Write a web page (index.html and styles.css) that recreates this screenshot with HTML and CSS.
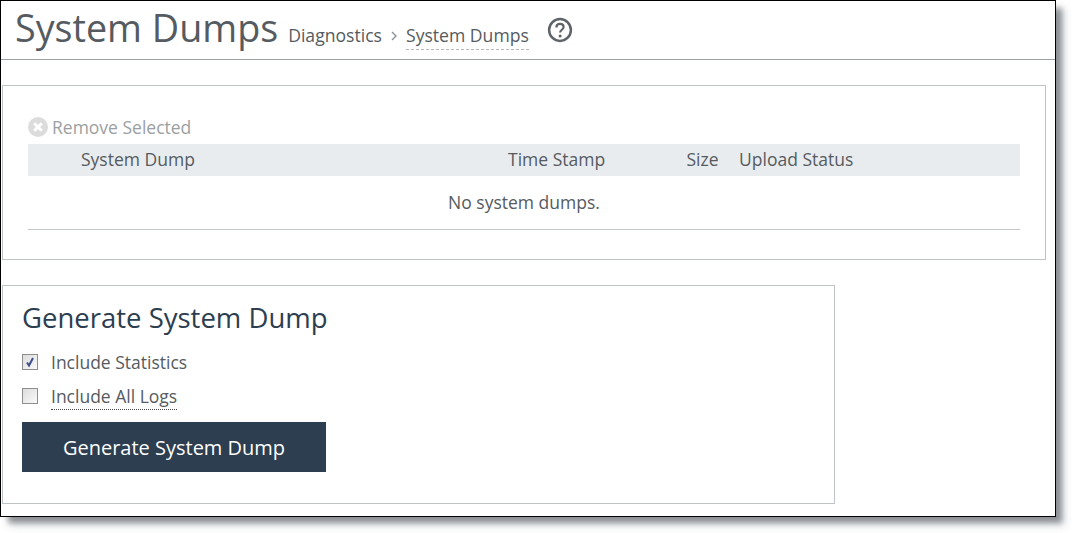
FILE: index.html
```html
<!DOCTYPE html>
<html lang="en">
<head>
<meta charset="utf-8">
<title>System Dumps</title>
<link rel="stylesheet" href="styles.css">
</head>
<body>
<div class="frame">
  <header class="head">
    <h1 class="title">System Dumps</h1>
    <span class="crumb">Diagnostics</span>
    <svg class="chev" width="8" height="12" viewBox="0 0 8 12"><path d="M2 2l4 4-4 4" fill="none" stroke="#8a9196" stroke-width="1.4"/></svg>
    <span class="crumb current">System Dumps</span>
    <svg class="help" width="26" height="26" viewBox="0 0 26 26"><circle cx="13" cy="13" r="10.9" fill="none" stroke="#5f6468" stroke-width="2.500"/><path d="M9.4 10.400c0-2.200 1.600-3.500 3.600-3.500s3.600 1.200 3.600 3.100c0 2.800-3.500 2.700-3.500 5.600" fill="none" stroke="#5f6468" stroke-width="2.200"/><circle cx="13.100" cy="18.900" r="1.500" fill="#5f6468"/></svg>
  </header>
  <section class="panel list">
    <div class="remove">
      <svg width="20" height="20" viewBox="0 0 20 20"><circle cx="10" cy="10" r="10" fill="#dcdcdc"/><path d="M6.200 6.200l7.600 7.600M13.800 6.200l-7.600 7.600" stroke="#fff" stroke-width="3"/></svg>
      <span>Remove Selected</span>
    </div>
    <div class="thead">
      <span class="c1">System Dump</span>
      <span class="c2">Time Stamp</span>
      <span class="c3">Size</span>
      <span class="c4">Upload Status</span>
    </div>
    <div class="empty">No system dumps.</div>
  </section>
  <section class="panel form">
    <h2 class="form-title">Generate System Dump</h2>
    <div class="check first">
      <span class="box"><svg width="12" height="12" viewBox="0 0 12 12"><path d="M3 6.500l2 3 4-7.500" fill="none" stroke="#3c4f8c" stroke-width="2"/></svg></span>
      <span>Include Statistics</span>
    </div>
    <div class="check">
      <span class="box"></span>
      <span class="dotted">Include All Logs</span>
    </div>
    <button class="btn" type="button">Generate System Dump</button>
  </section>
</div>
</body>
</html>
```
FILE: styles.css
```css
* { box-sizing: border-box; }
html, body { margin: 0; padding: 0; background: #fff; }
body { width: 1072px; height: 533px; overflow: hidden; font-family: "Open Sans", sans-serif; color: #555b60; }
.frame {
  width: 1056px; height: 517px;
  border: 1px solid #000; border-width: 1px 1.5px 1.5px 1.5px;
  background: #fff;
  box-shadow: 7px 7px 6px -1px rgba(60,64,70,.55), 10px 10px 8px rgba(190,200,210,.3);
}
.head {
  height: 59px; border-bottom: 1px solid #9aa0a4;
  display: flex; align-items: flex-start; padding-left: 14px;
}
.title { margin: 4px 0 0; font-size: 37.700px; line-height: 46px; font-weight: 400; color: #555b60; }
.crumb { margin-top: 22px; font-size: 17.600px; line-height: 24px; color: #555b60; }
.title + .crumb { margin-left: 10px; }
.chev { margin: 29px 8px 0 8px; }
.current { border-bottom: 1px dashed #b4b8bb; height: 27px; }
.help { margin: 16px 0 0 18px; }
.panel { border: 1px solid #bfc3c7; }
.list { width: 1044px; height: 175px; margin: 25px 0 0 1px; padding: 31px 25px 0; }
.remove { display: flex; align-items: center; height: 20px; font-size: 17.500px; color: #9b9fa2; gap: 4px; }
.thead { position: relative; display: flex; height: 32px; margin-top: 7px; padding-bottom: 2px; background: #e9ecef; align-items: center; font-size: 17.500px; color: #555b60; }
.c1 { margin-left: 53px; width: 427px; }
.c2 { width: 178.500px; }
.c3 { width: 52.500px; }
.empty { height: 54px; border-bottom: 1px solid #c4c7c9; text-align: center; line-height: 52px; font-size: 17.500px; color: #555b60; padding-left: 0; }
.form { width: 833px; height: 219px; margin: 25px 0 0 1px; padding: 14px 19px 0; }
.form-title { margin: 0; font-size: 27.500px; line-height: 36px; font-weight: 400; color: #2c3e50; }
.check { display: flex; align-items: center; height: 24px; font-size: 17.500px; color: #555b60; }
.check.first { margin-top: 14px; }
.check + .check { margin-top: 10px; }
.box { width: 16px; height: 16px; border: 1px solid #8e8e8e; background: linear-gradient(135deg, #dcdcdc, #fafafa); margin-right: 13px; display: flex; align-items: center; justify-content: center; flex: none; }
.dotted { border-bottom: 1px dotted #444; height: 26px; margin-top: 2px; }
.btn { display: block; margin-top: 14px; width: 304px; height: 50px; background: #2c3e50; color: #fff; border: 0; padding: 0; font: 400 20px "Open Sans", sans-serif; }
```
